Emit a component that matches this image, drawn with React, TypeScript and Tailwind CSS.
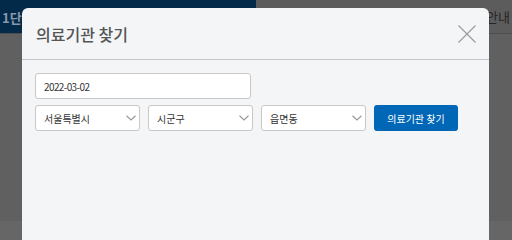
const font = { fontFamily: '"Noto Sans CJK KR", "Noto Sans", sans-serif' };

function Chevron() {
  return (
    <svg width="10" height="6" viewBox="0 0 10 6" className="text-[#9a9a9a]">
      <polyline points="0.5,0.8 5,5 9.5,0.8" fill="none" stroke="currentColor" strokeWidth="1.2" />
    </svg>
  );
}

function Select({ label }: { label: string }) {
  return (
    <div className="flex h-[26px] w-[105px] items-center justify-between rounded-[3px] border border-[#c8c8c8] bg-white pl-[8px] pr-[3px]">
      <span className="text-[10px] text-[#333]">{label}</span>
      <Chevron />
    </div>
  );
}

export default function App() {
  return (
    <div className="relative h-[240px] w-[512px] overflow-hidden bg-[#606060]" style={font}>
      {/* page behind the overlay */}
      <div className="flex h-[33px]">
        <div className="w-[256px] bg-[#042a4a] pl-[2px] pt-[8px] text-[13px] font-bold text-[#8798ad]">
          1단계
        </div>
        <div className="flex flex-1 justify-end bg-[#5c5c5c] pr-[2px] pt-[7px] text-[13px] text-[#262626]">
          안내
        </div>
      </div>
      <div className="h-[1px] bg-[#4e4e4e]" />
      <div className="h-[187px]" />
      <div className="h-[19px] bg-[#666666]" />

      {/* modal */}
      <div className="absolute left-[22px] top-[8px] h-[260px] w-[467px] rounded-t-[6px] bg-[#f4f5f7]">
        <div className="flex h-[52px] items-center justify-between border-b border-[#c5c6cc] pl-[14px] pr-[13px]">
          <h2 className="text-[16px] font-medium text-[#555]">의료기관 찾기</h2>
          <svg width="18" height="18" viewBox="0 0 18 18" className="text-[#999]">
            <path d="M0.5 0.5 L17.5 17.5 M17.5 0.5 L0.5 17.5" stroke="currentColor" strokeWidth="1.1" fill="none" />
          </svg>
        </div>
        <div className="flex flex-col gap-[6px] pl-[13px] pt-[13px]">
          <div className="flex h-[26px] w-[216px] items-center rounded-[3px] border border-[#c8c8c8] bg-white pl-[8px] text-[10px] tracking-[-0.6px] text-[#333]">
            2022-03-02
          </div>
          <div className="flex items-center gap-[8px]">
            <Select label="서울특별시" />
            <Select label="시군구" />
            <Select label="읍면동" />
            <button className="h-[26px] w-[84px] rounded-[3px] bg-[#0067b6] text-[10px] text-white">
              의료기관 찾기
            </button>
          </div>
        </div>
      </div>
    </div>
  );
}
